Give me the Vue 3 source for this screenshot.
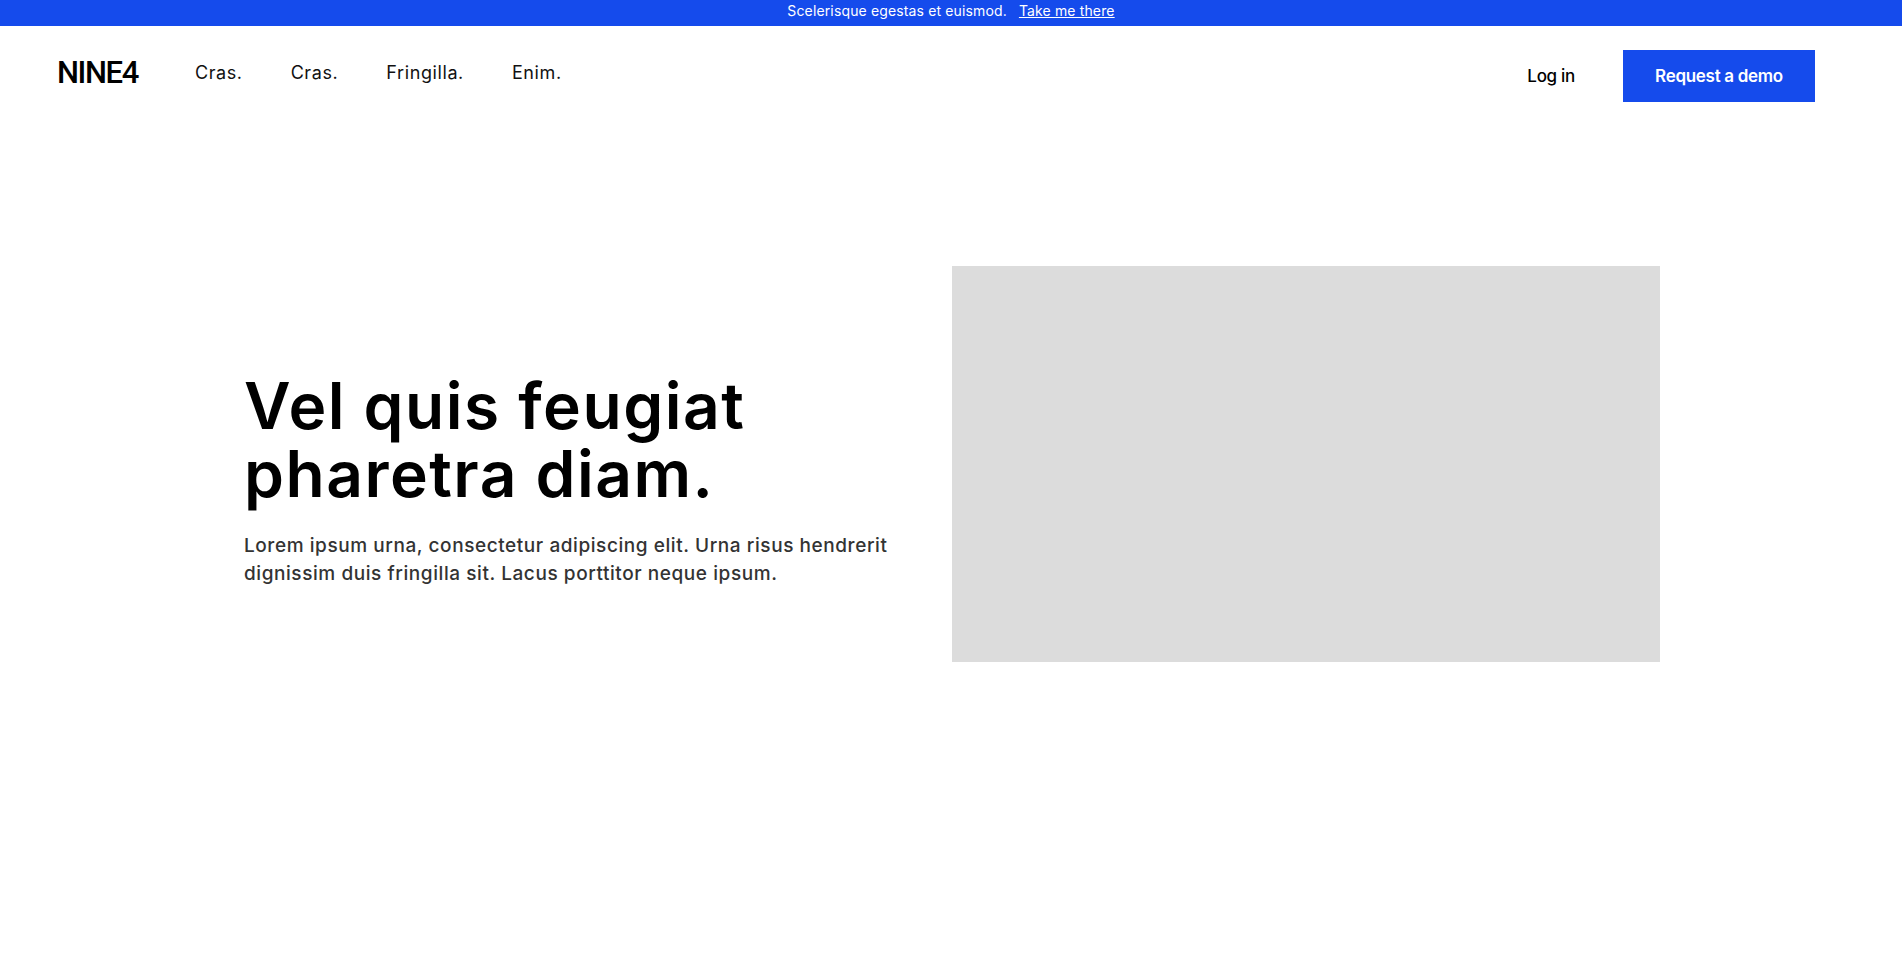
<template>
  <div class="page">
    <div class="announce">
      <span>Scelerisque egestas et euismod.</span>
      <a href="#" class="announce-link">Take me there</a>
    </div>

    <header class="nav">
      <div class="nav-left">
        <a href="#" class="logo">NINE4</a>
        <nav class="links">
          <a v-for="(link, i) in links" :key="i" href="#">{{ link }}</a>
        </nav>
      </div>
      <div class="nav-right">
        <a href="#" class="login">Log in</a>
        <a href="#" class="demo">Request a demo</a>
      </div>
    </header>

    <main class="hero">
      <div class="hero-copy">
        <h1>Vel quis feugiat pharetra diam.</h1>
        <p>Lorem ipsum urna, consectetur adipiscing elit. Urna risus hendrerit dignissim duis fringilla sit. Lacus porttitor neque ipsum.</p>
      </div>
      <div class="hero-image"></div>
    </main>
  </div>
</template>

<script setup>
const links = ['Cras.', 'Cras.', 'Fringilla.', 'Enim.']
</script>

<style>
html, body {
  background: #fff;
}
</style>

<style scoped>
.page {
  min-height: 956px;
  background: #fff;
  color: #000;
  font-family: Inter, 'Noto Sans', sans-serif;
}

a {
  color: inherit;
  text-decoration: none;
}

/* top bar */
.announce {
  height: 26px;
  box-sizing: border-box;
  padding-bottom: 5px;
  display: flex;
  align-items: center;
  justify-content: center;
  gap: 12px;
  background: #154bec;
  color: #fff;
  font-size: 14px;
  letter-spacing: 0.14px;
}

.announce-link {
  text-decoration: underline;
}

/* nav */
.nav {
  display: flex;
  justify-content: space-between;
  padding: 24px 87px 0 57px;
}

.nav-left {
  display: flex;
  align-items: center;
  height: 44px;
  gap: 57px;
}

.logo {
  font-family: Roboto, sans-serif;
  font-size: 31px;
  font-weight: 500;
  letter-spacing: -1.4px;
}

.links {
  display: flex;
  gap: 48px;
  font-size: 18px;
  letter-spacing: 0.6px;
  color: #111;
}

.nav-right {
  display: flex;
  align-items: center;
  gap: 48px;
}

.login {
  font-size: 17px;
  font-weight: 500;
  letter-spacing: -0.3px;
}

.demo {
  width: 192px;
  height: 52px;
  display: flex;
  align-items: center;
  justify-content: center;
  background: #154bec;
  color: #fff;
  font-size: 17px;
  font-weight: 600;
  letter-spacing: -0.3px;
}

/* hero */
.hero {
  display: flex;
  align-items: center;
  gap: 60px;
  padding: 164px 242px 0 244px;
}

.hero-copy {
  flex: 1;
  padding-top: 32px;
}

h1 {
  margin: 0;
  max-width: 560px;
  font-size: 64px;
  line-height: 68px;
  font-weight: 600;
  letter-spacing: 1.5px;
  color: #000;
}

.hero-copy p {
  margin: 24px 0 0;
  font-size: 19px;
  line-height: 28px;
  font-weight: 500;
  letter-spacing: 0.57px;
  color: #333;
}

.hero-image {
  flex: none;
  width: 708px;
  height: 396px;
  background: #dcdcdc;
}
</style>
